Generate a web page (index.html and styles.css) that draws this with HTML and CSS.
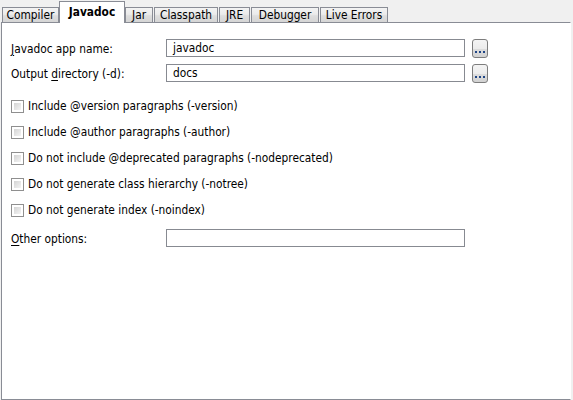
FILE: index.html
```html
<!DOCTYPE html>
<html>
<head>
<meta charset="utf-8">
<link rel="stylesheet" href="styles.css">
</head>
<body>
<div class="tabs">
  <div class="tab t-compiler">Compiler</div>
  <div class="tab tab-sel t-javadoc">Javadoc</div>
  <div class="tab t-jar">Jar</div>
  <div class="tab t-classpath">Classpath</div>
  <div class="tab t-jre">JRE</div>
  <div class="tab t-debugger">Debugger</div>
  <div class="tab t-live">Live Errors</div>
</div>
<div class="panel">
  <div class="fields">
    <label class="lbl"><u>J</u>avadoc app name:</label>
    <div class="field">javadoc</div>
    <div class="btn"><i></i><i></i><i></i></div>
    <label class="lbl">Output <u>d</u>irectory (-d):</label>
    <div class="field">docs</div>
    <div class="btn"><i></i><i></i><i></i></div>
  </div>
  <div class="options">
    <div class="opt"><span class="cb"></span>Include @version paragraphs (-version)</div>
    <div class="opt"><span class="cb"></span>Include @author paragraphs (-author)</div>
    <div class="opt"><span class="cb"></span>Do not include @deprecated paragraphs (-nodeprecated)</div>
    <div class="opt"><span class="cb"></span>Do not generate class hierarchy (-notree)</div>
    <div class="opt"><span class="cb"></span>Do not generate index (-noindex)</div>
  </div>
  <div class="fields other">
    <label class="lbl"><u>O</u>ther options:</label>
    <div class="field"></div>
  </div>
</div>
</body>
</html>
```
FILE: styles.css
```css
html, body {
  margin: 0;
  padding: 0;
}
body {
  background: #f0f0f0;
  font-family: "DejaVu Sans Condensed", "DejaVu Sans", sans-serif;
  font-stretch: condensed;
  font-size: 11.8px;
  color: #000;
  width: 573px;
  height: 400px;
  display: flex;
  flex-direction: column;
  overflow: hidden;
}
.tabs {
  height: 22px;
  display: flex;
  align-items: flex-end;
  padding-left: 2px;
  gap: 1px;
  flex: none;
}
.tab {
  box-sizing: border-box;
  height: 15px;
  border: 1px solid #898c95;
  border-bottom: none;
  background: linear-gradient(#f3f3f3, #ebebeb 45%, #dedede 55%, #d5d5d5);
  display: flex;
  align-items: center;
  justify-content: center;
  line-height: 13px;
  padding-top: 1px;
  white-space: nowrap;
}
.tab-sel {
  background: #fff;
  font-weight: bold;
  margin: 0 -1px -1px -1px;
  height: 22px;
  position: relative;
  z-index: 2;
  padding-top: 0;
}
.t-compiler { width: 57px; }
.t-javadoc { width: 66px; }
.t-jar { width: 28px; }
.t-classpath { width: 64px; }
.t-jre { width: 31px; }
.t-debugger { width: 68px; }
.t-live { width: 68px; }

.panel {
  flex: 1;
  box-sizing: border-box;
  margin: 0 2px 0 1px;
  background: #fff;
  border: 1px solid #898c95;
  border-right: 1px solid #fff;
  padding: 16px 0 0 9px;
  display: flex;
  flex-direction: column;
  position: relative;
  z-index: 1;
}
.fields {
  display: grid;
  grid-template-columns: 149px 299px 16px;
  column-gap: 6px;
  row-gap: 7px;
  grid-auto-rows: 18px;
  align-items: center;
}
.other {
  grid-template-columns: 149px 299px;
  margin-top: 6px;
}
.lbl {
  white-space: nowrap;
  line-height: 13px;
  padding-top: 2px;
}
u {
  text-underline-offset: 2px;
}
.field {
  box-sizing: border-box;
  height: 18px;
  border: 1px solid #878a91;
  padding: 1px 0 0 6px;
  line-height: 15px;
  background: #fff;
}
.btn {
  box-sizing: border-box;
  align-self: start;
  width: 16px;
  height: 19px;
  margin-left: 1px;
  border: 1px solid #7d7d7d;
  border-radius: 3px;
  background: linear-gradient(#f4f4f4, #ececec 50%, #dddddd 50%, #d2d2d2);
  display: flex;
  justify-content: center;
  align-items: flex-end;
  gap: 2px;
  padding-bottom: 4px;
}
.btn i {
  width: 2px;
  height: 2px;
  background: #1f4585;
}
.options {
  margin-top: 11px;
  display: flex;
  flex-direction: column;
}
.opt {
  height: 26px;
  display: flex;
  align-items: center;
  white-space: nowrap;
  line-height: 13px;
}
.cb {
  box-sizing: border-box;
  width: 13px;
  height: 13px;
  border: 1px solid #8f8f8f;
  background: #fff;
  padding: 2px;
  margin: 0 4px 0 0;
  flex: none;
  display: flex;
}
.cb::before {
  content: "";
  flex: 1;
  background: linear-gradient(135deg, #d4d4d4, #f4f4f4);
}
```
